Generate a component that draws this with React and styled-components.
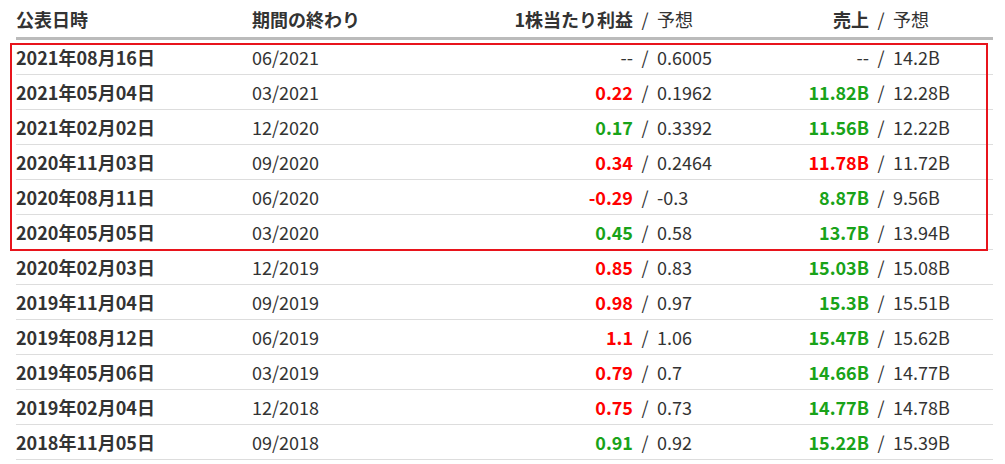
import React from 'react';
import styled, { createGlobalStyle } from 'styled-components';

const GlobalStyle = createGlobalStyle`
  body {
    margin: 0;
    background: #ffffff;
    font-family: "Noto Sans CJK JP", "Noto Sans", sans-serif;
    color: #333333;
  }
`;

const Table = styled.div`
  width: 977px;
  margin-left: 16px;
  font-size: 18px;
`;

const Row = styled.div`
  display: grid;
  grid-template-columns: 236px 148px 233px 24px 133px 79px 24px 100px;
  align-items: center;
  height: ${(p) => (p.$head ? '37px' : '34px')};
  border-bottom: ${(p) => (p.$head ? '3px solid #bbbbbb' : '1px solid #dddddd')};
  line-height: 1;
`;

const Cell = styled.div`
  white-space: nowrap;
  font-weight: ${(p) => (p.$bold ? 700 : 400)};
  text-align: ${(p) => p.$align || 'left'};
  color: ${(p) => p.$color || '#333333'};
`;

const Slash = styled.div`
  text-align: center;
  color: #333333;
`;

const HighlightGroup = styled.div`
  position: relative;

  &::after {
    content: '';
    position: absolute;
    top: 3px;
    left: -6px;
    right: 5px;
    bottom: -1px;
    border: 2px solid #e8141c;
    pointer-events: none;
  }
`;

const RED = '#ff0000';
const GREEN = '#19a319';

const rows = [
  ['2021年08月16日', '06/2021', '--', null, '0.6005', '--', null, '14.2B'],
  ['2021年05月04日', '03/2021', '0.22', RED, '0.1962', '11.82B', GREEN, '12.28B'],
  ['2021年02月02日', '12/2020', '0.17', GREEN, '0.3392', '11.56B', GREEN, '12.22B'],
  ['2020年11月03日', '09/2020', '0.34', RED, '0.2464', '11.78B', RED, '11.72B'],
  ['2020年08月11日', '06/2020', '-0.29', RED, '-0.3', '8.87B', GREEN, '9.56B'],
  ['2020年05月05日', '03/2020', '0.45', GREEN, '0.58', '13.7B', GREEN, '13.94B'],
  ['2020年02月03日', '12/2019', '0.85', RED, '0.83', '15.03B', GREEN, '15.08B'],
  ['2019年11月04日', '09/2019', '0.98', RED, '0.97', '15.3B', GREEN, '15.51B'],
  ['2019年08月12日', '06/2019', '1.1', RED, '1.06', '15.47B', GREEN, '15.62B'],
  ['2019年05月06日', '03/2019', '0.79', RED, '0.7', '14.66B', GREEN, '14.77B'],
  ['2019年02月04日', '12/2018', '0.75', RED, '0.73', '14.77B', GREEN, '14.78B'],
  ['2018年11月05日', '09/2018', '0.91', GREEN, '0.92', '15.22B', GREEN, '15.39B'],
];

function EarningsRow({ data }) {
  const [date, period, eps, epsColor, epsEst, rev, revColor, revEst] = data;
  return (
    <Row>
      <Cell $bold>{date}</Cell>
      <Cell>{period}</Cell>
      <Cell $align="right" $bold={!!epsColor} $color={epsColor}>{eps}</Cell>
      <Slash>/</Slash>
      <Cell>{epsEst}</Cell>
      <Cell $align="right" $bold={!!revColor} $color={revColor}>{rev}</Cell>
      <Slash>/</Slash>
      <Cell>{revEst}</Cell>
    </Row>
  );
}

export default function App() {
  return (
    <>
      <GlobalStyle />
      <Table>
        <Row $head>
          <Cell $bold>公表日時</Cell>
          <Cell $bold>期間の終わり</Cell>
          <Cell $bold $align="right">1株当たり利益</Cell>
          <Slash>/</Slash>
          <Cell>予想</Cell>
          <Cell $bold $align="right">売上</Cell>
          <Slash>/</Slash>
          <Cell>予想</Cell>
        </Row>
        <HighlightGroup>
          {rows.slice(0, 6).map((r) => (
            <EarningsRow key={r[0]} data={r} />
          ))}
        </HighlightGroup>
        {rows.slice(6).map((r) => (
          <EarningsRow key={r[0]} data={r} />
        ))}
      </Table>
    </>
  );
}
